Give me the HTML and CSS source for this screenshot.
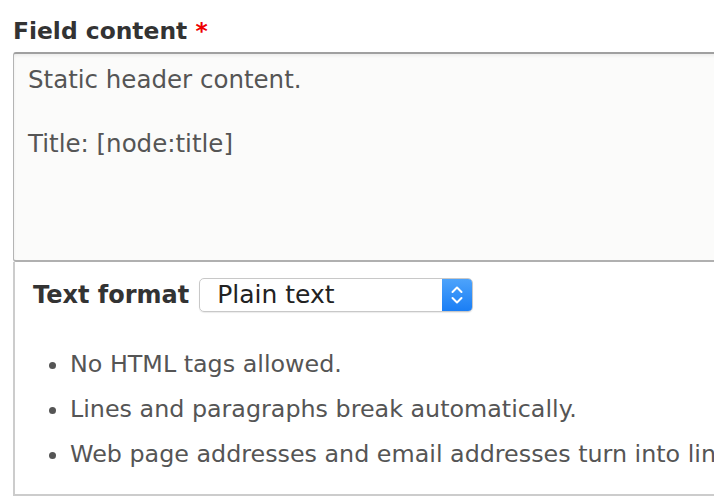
FILE: index.html
```html
<!DOCTYPE html>
<html>
<head>
<meta charset="utf-8">
<link rel="stylesheet" href="styles.css">
</head>
<body>
<div class="field">
  <label class="label">Field content <span class="req">*</span></label>
  <div class="textarea">
    <p>Static header content.</p>
    <p>Title: [node:title]</p>
  </div>
  <div class="format">
    <div class="format-row">
      <span class="format-label">Text format</span>
      <div class="select">
        <span class="select-text">Plain text</span>
        <span class="select-arrow">
          <svg width="14" height="24" viewBox="0 0 14 24"><path d="M2.5 9 L7 4.5 L11.5 9 M2.5 15 L7 19.5 L11.5 15" fill="none" stroke="#fff" stroke-width="2" stroke-linecap="round" stroke-linejoin="round"/></svg>
        </span>
      </div>
    </div>
    <ul class="tips">
      <li>No HTML tags allowed.</li>
      <li>Lines and paragraphs break automatically.</li>
      <li>Web page addresses and email addresses turn into links automatically.</li>
    </ul>
  </div>
</div>
</body>
</html>
```
FILE: styles.css
```css
html, body { margin: 0; padding: 0; background: #fff; }
body { font-family: "DejaVu Sans", "Lucida Grande", sans-serif; overflow: hidden; width: 714px; height: 498px; }
.field { padding: 14px 0 0 13px; width: 780px; }
.label { display: block; font-weight: bold; font-size: 23.4px; color: #333; line-height: 34px; height: 38px; }
.req { color: #e00; }
.textarea {
  box-sizing: border-box; height: 210px; background: #fbfbfa;
  border: 1px solid #b4b4b4; border-top: 2px solid #a0a0a0; border-bottom: 2px solid #b0b0b0; border-radius: 3px 0 0 3px;
  box-shadow: inset 0 2px 3px rgba(0,0,0,0.06);
  padding: 10px 14px; color: #555; font-size: 24.5px; line-height: 32px;
}
.textarea p { margin: 0 0 32px; }
.format { border-left: 2px solid #ccc; border-bottom: 2px solid #ccc; padding: 16px 0 0 18px; height: 216px; overflow: hidden; }
.format-row { display: flex; align-items: center; gap: 10px; }
.format-label { font-weight: bold; font-size: 24px; color: #333; }
.select {
  display: flex; width: 274px; height: 34px; box-sizing: border-box;
  border: 1px solid #c8c8c8; border-radius: 5px; overflow: hidden;
  box-shadow: 0 1px 1px rgba(0,0,0,0.08);
}
.select-text { flex: 1; font-size: 25px; color: #222; padding-left: 17px; line-height: 32px; }
.select-arrow { width: 30px; background: linear-gradient(#4da3fb, #1a7ef5); display: flex; align-items: center; justify-content: center; }
.tips { margin: 30px 0 0; padding: 0 0 0 37px; color: #555; font-size: 23.8px; line-height: 45px; white-space: nowrap; }
.tips li { list-style: disc; }
```
